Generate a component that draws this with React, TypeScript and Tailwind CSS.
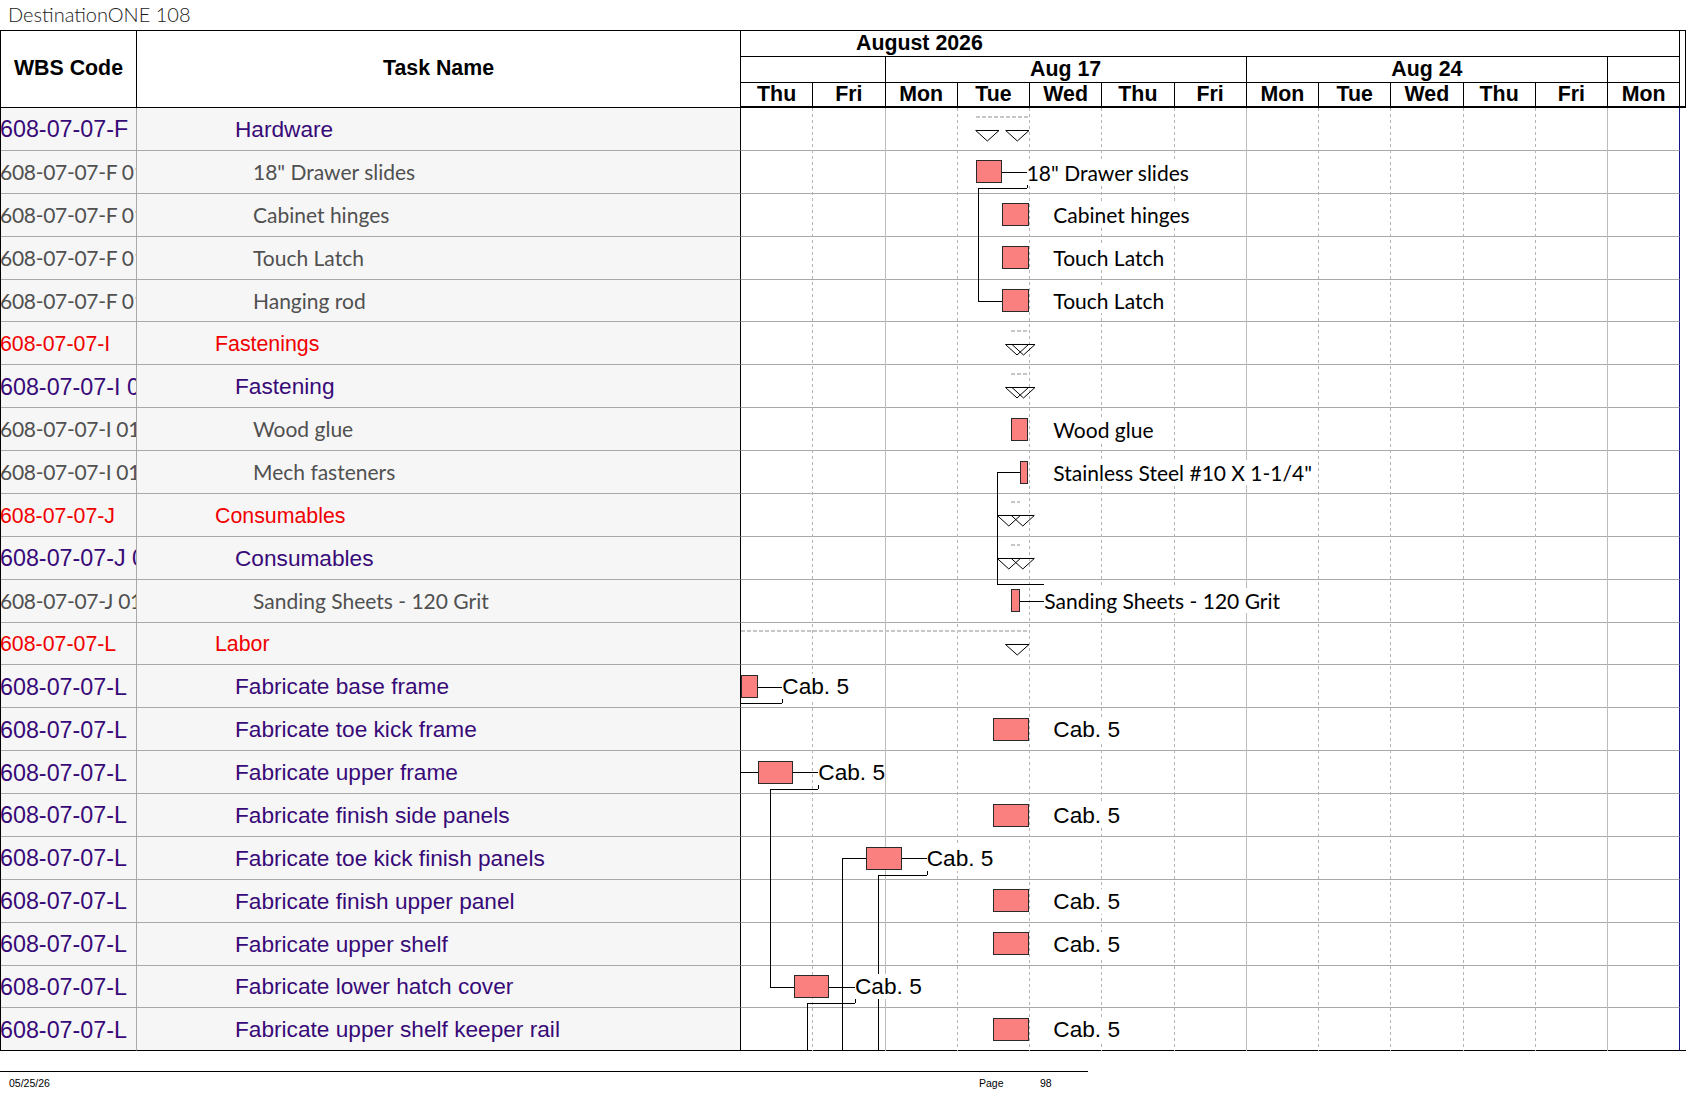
import React from "react";

const ROW_H = 42.886;
const DAY_W = 72.25;
const N = 22;
const H = N * ROW_H;
const rt = (i: number) => i * ROW_H;
const snap = (v: number) => Math.round(v) + 0.5;

type Kind = "red" | "purple" | "gray";
type Row = { wbs: string; name: string; kind: Kind };

const rows: Row[] = [
  { wbs: "608-07-07-F", name: "Hardware", kind: "purple" },
  { wbs: "608-07-07-F 0101", name: '18" Drawer slides', kind: "gray" },
  { wbs: "608-07-07-F 0102", name: "Cabinet hinges", kind: "gray" },
  { wbs: "608-07-07-F 0103", name: "Touch Latch", kind: "gray" },
  { wbs: "608-07-07-F 0104", name: "Hanging rod", kind: "gray" },
  { wbs: "608-07-07-I", name: "Fastenings", kind: "red" },
  { wbs: "608-07-07-I 01", name: "Fastening", kind: "purple" },
  { wbs: "608-07-07-I 0101", name: "Wood glue", kind: "gray" },
  { wbs: "608-07-07-I 0102", name: "Mech fasteners", kind: "gray" },
  { wbs: "608-07-07-J", name: "Consumables", kind: "red" },
  { wbs: "608-07-07-J 01", name: "Consumables", kind: "purple" },
  { wbs: "608-07-07-J 0101", name: "Sanding Sheets - 120 Grit", kind: "gray" },
  { wbs: "608-07-07-L", name: "Labor", kind: "red" },
  { wbs: "608-07-07-L", name: "Fabricate base frame", kind: "purple" },
  { wbs: "608-07-07-L", name: "Fabricate toe kick frame", kind: "purple" },
  { wbs: "608-07-07-L", name: "Fabricate upper frame", kind: "purple" },
  { wbs: "608-07-07-L", name: "Fabricate finish side panels", kind: "purple" },
  { wbs: "608-07-07-L", name: "Fabricate toe kick finish panels", kind: "purple" },
  { wbs: "608-07-07-L", name: "Fabricate finish upper panel", kind: "purple" },
  { wbs: "608-07-07-L", name: "Fabricate upper shelf", kind: "purple" },
  { wbs: "608-07-07-L", name: "Fabricate lower hatch cover", kind: "purple" },
  { wbs: "608-07-07-L", name: "Fabricate upper shelf keeper rail", kind: "purple" },
];

const wbsCls: Record<Kind, string> = {
  red: "text-[#f00000] font-['Liberation_Sans',Arial,sans-serif] text-[21.33px] translate-y-[2px]",
  purple: "text-[#380a78] font-['Liberation_Sans',Arial,sans-serif] text-[23.3px] translate-y-[1px]",
  gray: "text-[#505050] font-['Lato',sans-serif] text-[21px] tracking-[-0.3px]",
};
const nameCls: Record<Kind, string> = {
  red: "text-[#f00000] font-['Liberation_Sans',Arial,sans-serif] text-[21.33px] translate-y-[2px]",
  purple: "text-[#380a78] font-['Liberation_Sans',Arial,sans-serif] text-[22.67px]",
  gray: "text-[#505050] font-['Lato',sans-serif] text-[21px]",
};
const padCls: Record<Kind, string> = {
  red: "pl-[78px]",
  purple: "pl-[98px]",
  gray: "pl-[116px]",
};

const days = ["Thu", "Fri", "Mon", "Tue", "Wed", "Thu", "Fri", "Mon", "Tue", "Wed", "Thu", "Fri", "Mon"];

const bars: [number, number, number][] = [
  [1, 234.7, 260.7],
  [2, 261.3, 287.7],
  [3, 261.3, 287.7],
  [4, 261.3, 287.7],
  [7, 270, 287.3],
  [8, 279, 287.3],
  [11, 270, 279],
  [13, 0, 16.7],
  [14, 252.3, 287.7],
  [15, 17.3, 52.3],
  [16, 252.3, 287.7],
  [17, 125.3, 160.7],
  [18, 252.3, 287.7],
  [19, 252.3, 287.7],
  [20, 53.3, 88.3],
  [21, 252.3, 287.7],
];

const lines: [number, number, number, number][] = [
  [260.7, rt(1) + 21, 285.7, rt(1) + 21],
  [236.7, rt(1) + 37, 285.7, rt(1) + 37],
  [285.7, rt(1) + 33, 285.7, rt(1) + 37],
  [236.7, rt(1) + 37, 236.7, rt(4) + 21],
  [236.7, rt(4) + 21, 261.3, rt(4) + 21],
  [255.7, rt(8) + 21, 279, rt(8) + 21],
  [255.7, rt(8) + 21, 255.7, rt(11) + 4.6],
  [255.7, rt(11) + 4.6, 303.3, rt(11) + 4.6],
  [279, rt(11) + 21, 303.3, rt(11) + 21],
  [16.7, rt(13) + 21, 41.3, rt(13) + 21],
  [0, rt(13) + 37.5, 41.3, rt(13) + 37.5],
  [41.3, rt(13) + 33, 41.3, rt(13) + 37.5],
  [0, rt(15) + 21, 17.3, rt(15) + 21],
  [52.3, rt(15) + 21, 77.3, rt(15) + 21],
  [29.3, rt(15) + 37.5, 77.3, rt(15) + 37.5],
  [77.3, rt(15) + 33, 77.3, rt(15) + 37.5],
  [29.3, rt(15) + 37.5, 29.3, rt(20) + 21],
  [29.3, rt(20) + 21, 53.3, rt(20) + 21],
  [101.3, rt(17) + 21, 125.3, rt(17) + 21],
  [101.3, rt(17) + 21, 101.3, H],
  [160.7, rt(17) + 21, 185.7, rt(17) + 21],
  [137, rt(17) + 37.5, 185.7, rt(17) + 37.5],
  [185.7, rt(17) + 33, 185.7, rt(17) + 37.5],
  [137, rt(17) + 37.5, 137, H],
  [88.3, rt(20) + 21, 114, rt(20) + 21],
  [65.7, rt(20) + 37.5, 114, rt(20) + 37.5],
  [114, rt(20) + 33, 114, rt(20) + 37.5],
  [65.7, rt(20) + 37.5, 65.7, H],
];

const dashes: [number, number, number][] = [
  [0, 234.7, 287.7],
  [5, 270, 288],
  [6, 270, 288],
  [9, 270, 279],
  [10, 270, 279],
  [12, 0, 288],
];

const tris: [number, number, number][] = [
  [0, 234.7, 23.3],
  [0, 264.7, 23.3],
  [5, 264.5, 23],
  [5, 271, 23],
  [6, 264.5, 23],
  [6, 271, 23],
  [9, 256.3, 23],
  [9, 270.3, 23],
  [10, 256.3, 23],
  [10, 270.3, 23],
  [12, 264.5, 23.5],
];

type Lbl = [number, number, string, "cal" | "arial"];
const labels: Lbl[] = [
  [1, 285.7, '18" Drawer slides', "cal"],
  [2, 312.3, "Cabinet hinges", "cal"],
  [3, 312.3, "Touch Latch", "cal"],
  [4, 312.3, "Touch Latch", "cal"],
  [7, 312.3, "Wood glue", "cal"],
  [8, 312.3, 'Stainless Steel #10 X 1-1/4"', "cal"],
  [11, 303.3, "Sanding Sheets - 120 Grit", "cal"],
  [13, 41.3, "Cab. 5", "arial"],
  [14, 312.3, "Cab. 5", "arial"],
  [15, 77.3, "Cab. 5", "arial"],
  [16, 312.3, "Cab. 5", "arial"],
  [17, 185.7, "Cab. 5", "arial"],
  [18, 312.3, "Cab. 5", "arial"],
  [19, 312.3, "Cab. 5", "arial"],
  [20, 114, "Cab. 5", "arial"],
  [21, 312.3, "Cab. 5", "arial"],
];

function ChartOverlay() {
  const grid = [];
  for (let d = 1; d <= 12; d++) {
    const x = Math.round(d * DAY_W) - 0.5;
    const solid = d === 2 || d === 7 || d === 12;
    grid.push(
      <line
        key={"g" + d}
        x1={x}
        y1={0}
        x2={x}
        y2={H}
        stroke={solid ? "#bcbcbc" : "#b4b4b4"}
        strokeWidth={1}
        strokeDasharray={solid ? undefined : "3 3"}
      />
    );
  }
  return (
    <svg
      className="absolute left-[740px] top-0"
      width={939.25}
      height={H}
      viewBox={`0 0 939.25 ${H}`}
      shapeRendering="crispEdges"
    >
      {grid}
      {dashes.map(([r, x1, x2], i) => (
        <line
          key={"d" + i}
          x1={x1}
          y1={snap(rt(r) + 8.5)}
          x2={x2}
          y2={snap(rt(r) + 8.5)}
          stroke="#c6c6c6"
          strokeWidth={2}
          strokeDasharray="4 2"
        />
      ))}
      {lines.map(([x1, y1, x2, y2], i) => (
        <line
          key={"l" + i}
          x1={x1 === x2 ? snap(x1) : Math.round(x1)}
          y1={y1 === y2 ? snap(y1) : Math.round(y1)}
          x2={x1 === x2 ? snap(x2) : Math.round(x2)}
          y2={y1 === y2 ? snap(y2) : Math.round(y2)}
          stroke="#000"
          strokeWidth={1}
        />
      ))}
      {bars.map(([r, x1, x2], i) => {
        const a = Math.round(x1);
        const b = Math.round(x2);
        const y = Math.round(rt(r) + 9.5);
        return (
          <rect
            key={"b" + i}
            x={a + 0.5}
            y={y + 0.5}
            width={b - a - 1}
            height={22}
            fill="#fa7f7f"
            stroke="#2a2a2a"
            strokeWidth={1}
          />
        );
      })}
      {tris.map(([r, x, w], i) => {
        const top = Math.round(rt(r) + 21.5) + 0.5;
        const bot = top + 10.5;
        return (
          <polygon
            key={"t" + i}
            points={`${x},${top} ${x + w},${top} ${x + w / 2},${bot}`}
            fill="none"
            stroke="#000"
            strokeWidth={1}
            shapeRendering="geometricPrecision"
          />
        );
      })}
    </svg>
  );
}

function ChartLabels() {
  return (
    <div className="absolute left-[740px] top-0 w-[939.25px]" style={{ height: H }}>
      {labels.map(([r, x, t, f], i) => (
        <span
          key={i}
          className={
            f === "cal"
              ? "absolute h-[25px] leading-[25px] whitespace-nowrap bg-white text-black font-['Lato',sans-serif] text-[21px]"
              : "absolute h-[25px] leading-[25px] whitespace-nowrap bg-white text-black font-['Liberation_Sans',Arial,sans-serif] text-[22.67px]"
          }
          style={{ left: x, top: rt(r) + 8.7 }}
        >
          {t}
        </span>
      ))}
    </div>
  );
}

export default function App() {
  return (
    <div className="w-[1687px] h-[1097px] bg-white overflow-hidden font-['Liberation_Sans',Arial,sans-serif]">
      <div className="h-[30px] pl-[8px] pt-[2px] font-['Lato',sans-serif] font-light text-[20px] leading-[24px] text-[#1a1a1a]">
        DestinationONE 108
      </div>

      <div className="w-[1686px] border-t border-l border-black">
        {/* header */}
        <div className="flex h-[77px]">
          <div className="w-[136px] shrink-0 border-r border-b border-black flex items-center justify-center font-bold text-[21.33px] text-black">
            WBS Code
          </div>
          <div className="w-[604px] shrink-0 border-r border-b border-black flex items-center justify-center font-bold text-[21.33px] text-black">
            Task Name
          </div>
          <div className="w-[939.25px] shrink-0 flex flex-col font-bold text-[21.33px] text-black">
            <div className="h-[26px] border-b border-r border-black flex items-center pl-[115px] leading-none">
              August 2026
            </div>
            <div className="h-[26px] border-b border-black flex leading-none">
              <div className="w-[144.5px] shrink-0 border-r border-black" />
              <div className="w-[361.25px] shrink-0 border-r border-black flex items-center justify-center">
                Aug 17
              </div>
              <div className="w-[361.25px] shrink-0 border-r border-black flex items-center justify-center">
                Aug 24
              </div>
              <div className="w-[72.25px] shrink-0 border-r border-black" />
            </div>
            <div className="h-[25px] border-b-2 border-black flex leading-none">
              {days.map((d, i) => (
                <div
                  key={i}
                  className="w-[72.25px] shrink-0 border-r border-black flex items-center justify-center"
                >
                  {d}
                </div>
              ))}
            </div>
          </div>
          <div className="w-[5.75px] shrink-0 border-r border-b-2 border-black" />
        </div>

        {/* body */}
        <div className="relative">
          {rows.map((r, i) => {
            const last = i === rows.length - 1;
            return (
              <div key={i} className="flex h-[42.886px]">
                <div
                  className={
                    (last ? "border-b-black " : "border-b-[#a9a9a9] ") +
                    "w-[136px] shrink-0 border-b border-r border-r-[#a9a9a9] bg-[#f6f6f6] overflow-hidden whitespace-nowrap flex items-center"
                  }
                >
                  <span className={"ml-[-1px] " + wbsCls[r.kind]}>{r.wbs}</span>
                </div>
                <div
                  className={
                    (last ? "border-b-black " : "border-b-[#a9a9a9] ") +
                    "w-[604px] shrink-0 border-b border-r border-r-black bg-[#f6f6f6] overflow-hidden whitespace-nowrap flex items-center " +
                    padCls[r.kind]
                  }
                >
                  <span className={nameCls[r.kind]}>{r.name}</span>
                </div>
                <div
                  className={
                    (last ? "border-b-black " : "border-b-[#a9a9a9] ") +
                    "w-[939.25px] shrink-0 border-b border-r border-r-[#16168a] bg-white"
                  }
                />
                <div
                  className={
                    last
                      ? "w-[5.75px] shrink-0 border-b border-black"
                      : "w-[5.75px] shrink-0"
                  }
                />
              </div>
            );
          })}
          <ChartOverlay />
          <ChartLabels />
        </div>
      </div>

      <div className="mt-[20px] w-[1088px] border-t border-black flex pt-[5px] text-[10.5px] leading-[12px] text-black font-['Liberation_Sans',Arial,sans-serif]">
        <span className="w-[979px] shrink-0 pl-[9px]">05/25/26</span>
        <span className="w-[61px] shrink-0">Page</span>
        <span>98</span>
      </div>
    </div>
  );
}
